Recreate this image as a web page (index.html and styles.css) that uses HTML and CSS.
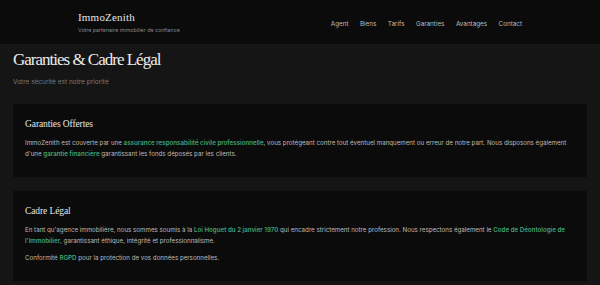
FILE: index.html
```html
<!DOCTYPE html>
<html lang="fr">
<head>
    <meta charset="UTF-8">
    <meta name="viewport" content="width=device-width, initial-scale=1.0">
    <title>Garanties & Cadre Légal - ImmoZenith</title>
    <link rel="stylesheet" href="styles.css">
</head>
<body>
    <header class="site-header">
        <div class="brand">
            <div class="brand-name">ImmoZenith</div>
            <div class="brand-tagline">Votre partenaire immobilier de confiance</div>
        </div>
        <nav class="nav">
            <a href="#">Agent</a>
            <a href="#">Biens</a>
            <a href="#">Tarifs</a>
            <a href="#">Garanties</a>
            <a href="#">Avantages</a>
            <a href="#">Contact</a>
        </nav>
    </header>

    <main class="page">
        <h1>Garanties &amp; Cadre Légal</h1>
        <p class="lead">Votre sécurité est notre priorité</p>

        <section class="card">
            <h2>Garanties Offertes</h2>
            <p>ImmoZenith est couverte par une <strong>assurance responsabilité civile professionnelle</strong>, vous protégeant contre tout éventuel manquement ou erreur de notre part. Nous disposons également d'une <strong>garantie financière</strong> garantissant les fonds déposés par les clients.</p>
        </section>

        <section class="card">
            <h2>Cadre Légal</h2>
            <p>En tant qu'agence immobilière, nous sommes soumis à la <strong>Loi Hoguet du 2 janvier 1970</strong> qui encadre strictement notre profession. Nous respectons également le <strong>Code de Déontologie de l'Immobilier</strong>, garantissant éthique, intégrité et professionnalisme.</p>
            <p>Conformité <strong>RGPD</strong> pour la protection de vos données personnelles.</p>
        </section>
    </main>
</body>
</html>
```

FILE: styles.css
```css
body {
    margin: 0;
    background-color: #151515;
    color: #c8c8c8;
    font-family: Inter, "Liberation Sans", sans-serif;
}
.site-header {
    display: flex;
    justify-content: space-between;
    align-items: center;
    height: 44px;
    padding: 0 78px;
    background-color: #0b0b0b;
}
.brand-name {
    font-family: "Liberation Serif", serif;
    font-size: 11px;
    color: #e6e6e6;
    letter-spacing: 0.2px;
}
.brand-tagline {
    margin-top: 4px;
    font-size: 5.3px;
    color: #8a8a8a;
}
.nav {
    display: flex;
    gap: 11.5px;
    margin-top: 4px;
}
.nav a {
    color: #bdbdbd;
    text-decoration: none;
    font-size: 6.3px;
}
.page {
    padding: 6px 13px 0;
}
h1 {
    margin: 0;
    font-family: "Liberation Serif", serif;
    font-weight: normal;
    font-size: 17px;
    letter-spacing: -1px;
    color: #ececec;
}
.lead {
    margin: 8px 0 18px;
    font-size: 6.5px;
    color: #7a7a7a;
}
.card {
    background-color: #0b0b0b;
    padding: 14px 12px 12px;
    margin-bottom: 14px;
}
h2 {
    margin: 0 0 7px;
    font-family: "Liberation Serif", serif;
    font-weight: normal;
    font-size: 9.5px;
    line-height: 12px;
    letter-spacing: -0.1px;
    color: #e6e6e6;
}
.card p {
    margin: 0 0 6px;
    font-size: 6.2px;
    line-height: 11px;
    color: #bdbdbd;
}
.card strong {
    color: #3fa37a;
    font-weight: 600;
}
```
